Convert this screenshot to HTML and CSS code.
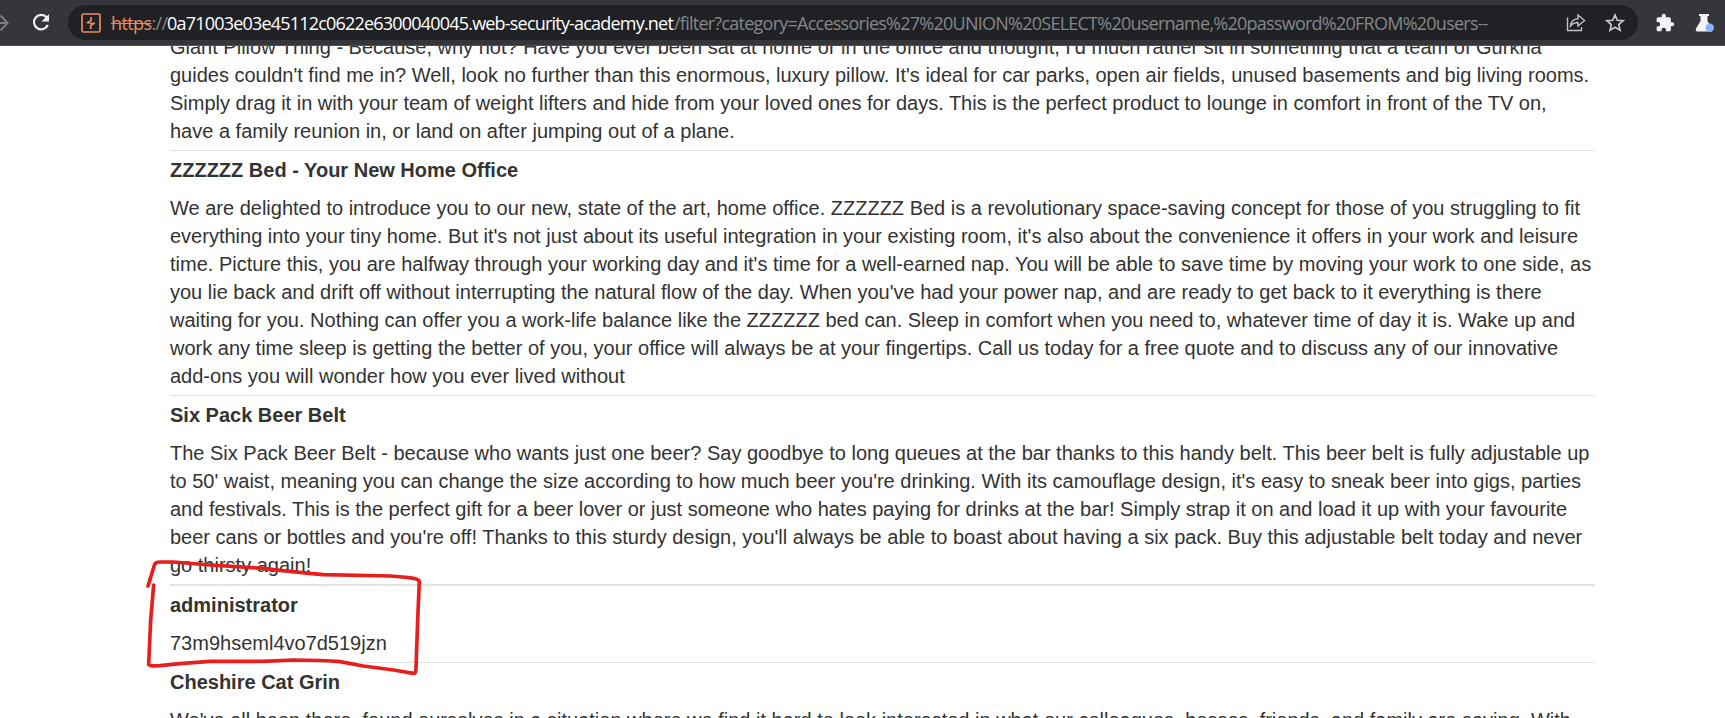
FILE: index.html
```html
<!DOCTYPE html>
<html lang="en">
<head>
<meta charset="utf-8">
<title>Accessories</title>
<link rel="stylesheet" href="styles.css">
</head>
<body>
<header class="toolbar">
  <svg class="forward" width="9" height="20" viewBox="0 0 9 20"><path d="M0 10H7M0.500 2.500L7.500 10L0.500 17.500" fill="none" stroke="#7d7e80" stroke-width="2"/></svg>
  <svg class="reload" width="20" height="20" viewBox="0 0 20 20"><path d="M15.700 4.500A7.200 7.200 0 1 0 16.800 12" fill="none" stroke="#f1f3f4" stroke-width="2.200"/><path d="M18 1V8.500H10.500Z" fill="#f1f3f4"/></svg>
  <div class="omnibox">
    <svg class="burp" width="20" height="20" viewBox="0 0 20 20"><rect x="1" y="1" width="18" height="18" rx="1.500" fill="none" stroke="#f0895f" stroke-width="1.700"/><path d="M10 4V7.500L6.300 9.700L13.300 10.300L9.700 12.500V16" fill="none" stroke="#f0895f" stroke-width="1.700" stroke-linejoin="round"/></svg>
    <div class="url"><span class="scheme"><s>https</s>://</span><span class="host">0a71003e03e45112c0622e6300040045.web-security-academy.net</span><span class="path">/filter?category=Accessories%27%20UNION%20SELECT%20username,%20password%20FROM%20users--</span></div>
    <svg class="share" width="20" height="20" viewBox="0 0 20 20"><path d="M1.500 4.500V17.500H15.500V14" fill="none" stroke="#c0c1c3" stroke-width="1.400"/><path d="M4.500 13C5 8.500 8 6 12 5.800V2L18.500 7.500L12 13V9.500C8.500 9.500 6.500 10.500 4.500 13Z" fill="none" stroke="#c0c1c3" stroke-width="1.400"/></svg>
    <svg class="star" width="20" height="20" viewBox="0 0 20 20"><path d="M10 2L12.300 7.300L18 7.800L13.700 11.600L15 17.200L10 14.200L5 17.200L6.300 11.600L2 7.800L7.700 7.300Z" fill="none" stroke="#c6c7c9" stroke-width="1.700"/></svg>
  </div>
  <svg class="puzzle" width="20" height="20" viewBox="0 0 24 24"><path d="M20.500 11H19V7c0-1.100-.9-2-2-2h-4V3.500a2.500 2.500 0 0 0-5 0V5H4c-1.100 0-2 .9-2 2v3.800h1.500a2.700 2.700 0 0 1 0 5.400H2V20c0 1.100.9 2 2 2h3.800v-1.500a2.700 2.700 0 0 1 5.400 0V22H17c1.100 0 2-.9 2-2v-4h1.500a2.500 2.500 0 0 0 0-5z" fill="#f1f3f4"/></svg>
  <svg class="flask" width="20" height="20" viewBox="0 0 20 20"><path d="M4 1H14V3H12.500V8L17 15.500Q18 18.500 15.500 18.500H2.500Q0 18.500 1 15.500L5.500 8V3H4Z" fill="#f1f3f4"/><circle cx="14.800" cy="14.700" r="4.200" fill="#8ab4f8"/></svg>
</header>
<main class="page">
  <section class="item first">
    <p>Giant Pillow Thing - Because, why not? Have you ever been sat at home or in the office and thought, I'd much rather sit in something that a team of Gurkha<br>guides couldn't find me in? Well, look no further than this enormous, luxury pillow. It's ideal for car parks, open air fields, unused basements and big living rooms.<br>Simply drag it in with your team of weight lifters and hide from your loved ones for days. This is the perfect product to lounge in comfort in front of the TV on,<br>have a family reunion in, or land on after jumping out of a plane.</p>
  </section>
  <section class="item">
    <h2>ZZZZZZ Bed - Your New Home Office</h2>
    <p>We are delighted to introduce you to our new, state of the art, home office. ZZZZZZ Bed is a revolutionary space-saving concept for those of you struggling to fit<br>everything into your tiny home. But it's not just about its useful integration in your existing room, it's also about the convenience it offers in your work and leisure<br>time. Picture this, you are halfway through your working day and it's time for a well-earned nap. You will be able to save time by moving your work to one side, as<br>you lie back and drift off without interrupting the natural flow of the day. When you've had your power nap, and are ready to get back to it everything is there<br>waiting for you. Nothing can offer you a work-life balance like the ZZZZZZ bed can. Sleep in comfort when you need to, whatever time of day it is. Wake up and<br>work any time sleep is getting the better of you, your office will always be at your fingertips. Call us today for a free quote and to discuss any of our innovative<br>add-ons you will wonder how you ever lived without</p>
  </section>
  <section class="item">
    <h2>Six Pack Beer Belt</h2>
    <p>The Six Pack Beer Belt - because who wants just one beer? Say goodbye to long queues at the bar thanks to this handy belt. This beer belt is fully adjustable up<br>to 50' waist, meaning you can change the size according to how much beer you're drinking. With its camouflage design, it's easy to sneak beer into gigs, parties<br>and festivals. This is the perfect gift for a beer lover or just someone who hates paying for drinks at the bar! Simply strap it on and load it up with your favourite<br>beer cans or bottles and you're off! Thanks to this sturdy design, you'll always be able to boast about having a six pack. Buy this adjustable belt today and never<br>go thirsty again!</p>
  </section>
  <section class="item marked">
    <h2>administrator</h2>
    <p>73m9hseml4vo7d519jzn</p>
    <svg class="scribble" width="310" height="178" viewBox="0 0 930 534"><path d="M54 138L74 73Q77 66 90 66L130 66L240 75L400 85Q500 97 580 104L780 108Q820 110 850 115Q868 118 868 125L863 240L858 385Q858 402 850 400L790 390L700 378L630 365Q580 360 490 360L400 364L240 364L150 371L90 377Q54 379 56 372L62 240L71 135" fill="none" stroke="#e81e1e" stroke-width="11" stroke-linecap="round" stroke-linejoin="round"/></svg>
  </section>
  <section class="item">
    <h2>Cheshire Cat Grin</h2>
    <p>We've all been there, found ourselves in a situation where we find it hard to look interested in what our colleagues, bosses, friends, and family are saying. With</p>
  </section>
</main>
</body>
</html>
```
FILE: styles.css
```css
body { margin: 0; height: 718px; overflow: hidden; background: #fff; display: flex; flex-direction: column; font-family: "Liberation Sans", Arial, sans-serif; }
.toolbar { box-sizing: border-box; height: 46px; flex: none; display: flex; align-items: center; background: #35363a; border-bottom: 1px solid #505155; }
.forward { margin-right: 22px; }
.reload { margin-right: 17px; }
.omnibox { box-sizing: border-box; width: 1570px; height: 35px; border-radius: 18px; background: #202124; display: flex; align-items: center; padding: 0 13px 0 13px; }
.burp { flex: none; margin-right: 10px; }
.url { flex: 1; display: flex; white-space: nowrap; font: 18px/24px "Open Sans", sans-serif; color: #85878a; }
.scheme { width: 56px; letter-spacing: -0.6px; }
.scheme s { color: #f0895f; }
.host { width: 507px; color: #fff; letter-spacing: -0.8px; }
.path { letter-spacing: -0.75px; }
.share { flex: none; margin-right: 19px; }
.star { flex: none; }
.puzzle { margin: 0 20px 0 17px; }
.page { flex: 1; min-height: 0; overflow: hidden; padding: 0 130px 0 170px; }
.item { position: relative; border-top: 1px solid #e3e3e3; padding: 5px 0; font-size: 20px; line-height: 28px; color: #333332; white-space: nowrap; }
.item h2 { margin: 0 0 10px; font-size: 20px; line-height: 28px; }
.item p { margin: 0; }
.first { border: 0; padding-top: 0; margin-top: -13px; }
.marked { border-top-width: 2px; z-index: 1; }
.scribble { position: absolute; left: -40px; top: -46px; }
```
